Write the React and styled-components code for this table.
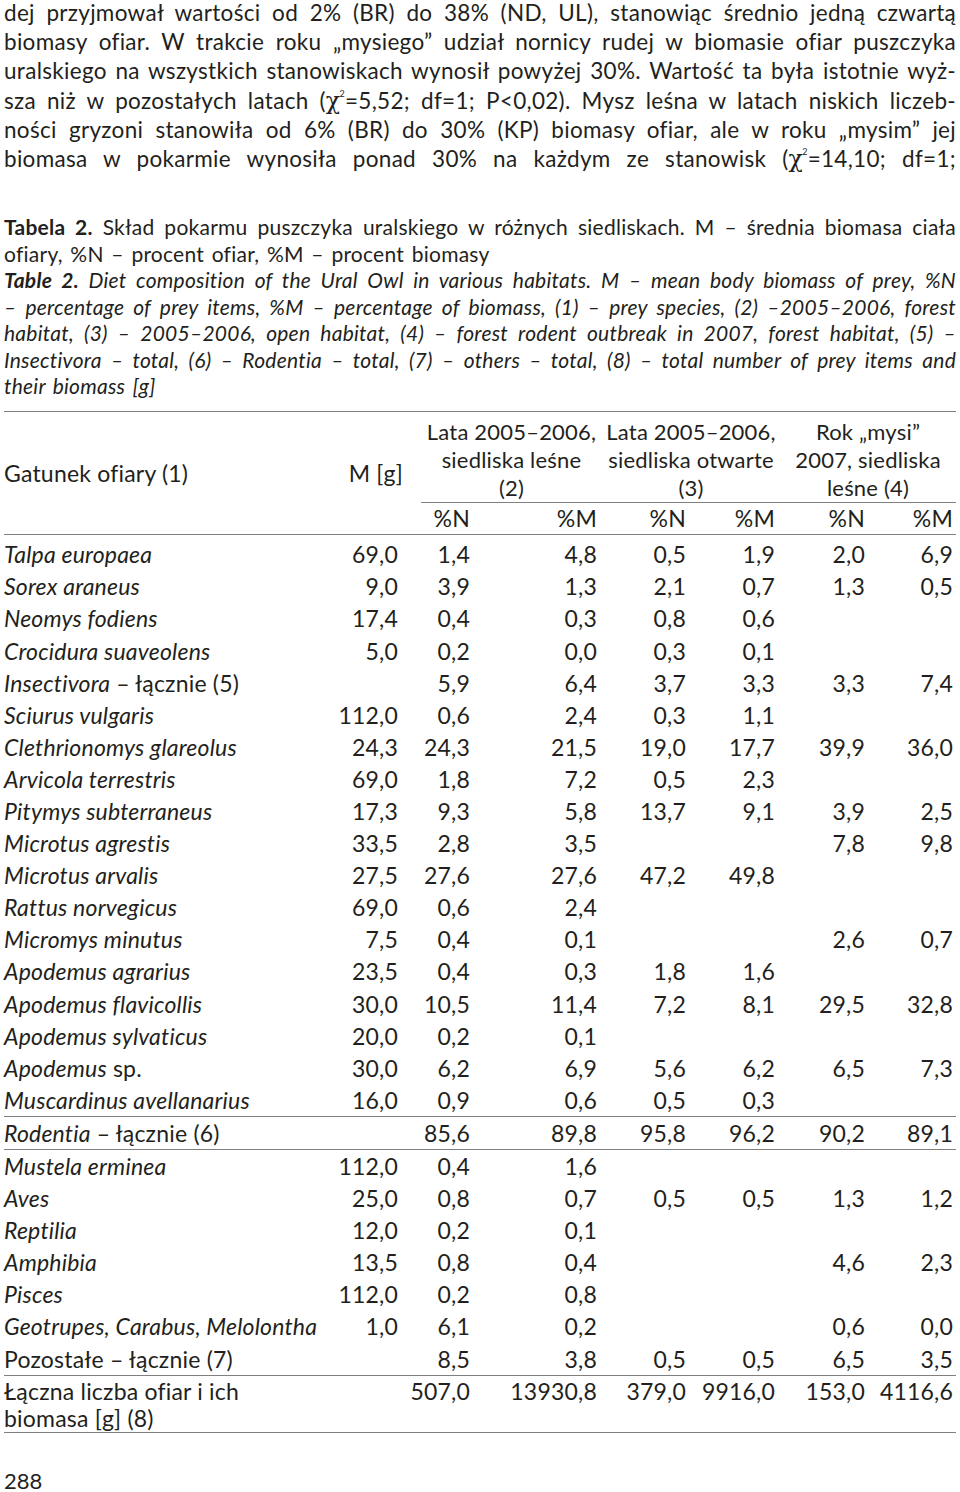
import React from "react";
import styled, { createGlobalStyle } from "styled-components";

const GlobalStyle = createGlobalStyle`
  html, body { margin: 0; padding: 0; background: #ffffff; }
  body {
    color: #231f20;
    font-family: Lato, "Open Sans", "Liberation Sans", sans-serif;
    -webkit-font-smoothing: antialiased;
  }
`;

const Page = styled.div`
  width: 952px;
  padding: 0 4px;
  overflow: hidden;
`;

const Para = styled.div`
  margin: -2px 0 0;
  font-size: 22.5px;
  line-height: 29.2px;
  letter-spacing: 0.3px;
  word-spacing: 2px;
`;

const Line = styled.div`
  text-align: justify;
  text-align-last: ${(p) => (p.$last ? "left" : "justify")};
  font-style: ${(p) => (p.$en ? "italic" : "normal")};
  white-space: nowrap;
`;

const Chi = styled.span`
  font-family: "DejaVu Serif", "Liberation Serif", serif;
  font-size: 1.05em;
  line-height: 0;
  sup {
    font-family: Lato, sans-serif;
    font-size: 9px;
    line-height: 0;
    vertical-align: 12px;
    margin-left: -1px;
  }
`;

const Caption = styled.div`
  margin-top: 41px;
  font-size: 21px;
  line-height: 26.5px;
  letter-spacing: 0.25px;
  word-spacing: 2px;
`;

const Bold = styled.b`
  font-weight: 700;
`;

const Table = styled.table`
  margin-top: 11px;
  width: 952px;
  table-layout: fixed;
  border-collapse: collapse;
  font-size: 23px;
  letter-spacing: 0.2px;
  border-top: 1.5px solid #808080;
  border-bottom: 1.5px solid #808080;
`;

const NameHead = styled.th`
  font-weight: 400;
  text-align: left;
  vertical-align: middle;
  padding: 0;
  white-space: nowrap;
  border-bottom: 1.5px solid #808080;
`;

const MHead = styled.th`
  font-weight: 400;
  text-align: right;
  vertical-align: middle;
  padding: 0;
  white-space: nowrap;
  border-bottom: 1.5px solid #808080;
`;

const GroupHead = styled.th`
  font-weight: 400;
  padding: 0;
  vertical-align: top;
`;

const GroupInner = styled.div`
  margin-left: ${(p) => p.$indent || 0}px;
  padding-top: 6px;
  text-align: center;
  font-size: 22px;
  line-height: 28px;
  white-space: nowrap;
  border-bottom: 1.5px solid #808080;
`;

const SubHead = styled.th`
  font-weight: 400;
  text-align: right;
  padding: 0 ${(p) => p.$pr ?? 5}px 0 0;
  line-height: 31px;
  white-space: nowrap;
  border-bottom: 1.5px solid #808080;
`;

const Row = styled.tr`
  border-top: ${(p) => (p.$rule ? "1.5px solid #808080" : "none")};
  border-bottom: ${(p) => (p.$ruleBelow ? "1.5px solid #808080" : "none")};
`;

const Name = styled.td`
  padding: ${(p) => (p.$first ? "3.5px 0 0" : p.$tall ? "2px 0 0.5px" : "0")};
  line-height: ${(p) => (p.$tall ? "27px" : "32.1px")};
  text-align: left;
  vertical-align: top;
  white-space: ${(p) => (p.$tall ? "normal" : "nowrap")};
`;

const Num = styled.td`
  padding: ${(p) => (p.$first ? "3.5px" : p.$tall ? "2px" : "0")}
    ${(p) => p.$pr ?? 5}px 0 0;
  line-height: ${(p) => (p.$tall ? "27px" : "32.1px")};
  text-align: right;
  vertical-align: top;
  white-space: nowrap;
`;

const PageNo = styled.div`
  margin-top: 38px;
  font-size: 22px;
  line-height: 20px;
`;

const I = styled.i`
  font-style: italic;
`;

const colWidths = [326, 73, 72, 127, 89, 89, 90, 86];

const rows = [
  [<I>Talpa europaea</I>, "69,0", "1,4", "4,8", "0,5", "1,9", "2,0", "6,9"],
  [<I>Sorex araneus</I>, "9,0", "3,9", "1,3", "2,1", "0,7", "1,3", "0,5"],
  [<I>Neomys fodiens</I>, "17,4", "0,4", "0,3", "0,8", "0,6", "", ""],
  [<I>Crocidura suaveolens</I>, "5,0", "0,2", "0,0", "0,3", "0,1", "", ""],
  [<><I>Insectivora</I> – łącznie (5)</>, "", "5,9", "6,4", "3,7", "3,3", "3,3", "7,4"],
  [<I>Sciurus vulgaris</I>, "112,0", "0,6", "2,4", "0,3", "1,1", "", ""],
  [<I>Clethrionomys glareolus</I>, "24,3", "24,3", "21,5", "19,0", "17,7", "39,9", "36,0"],
  [<I>Arvicola terrestris</I>, "69,0", "1,8", "7,2", "0,5", "2,3", "", ""],
  [<I>Pitymys subterraneus</I>, "17,3", "9,3", "5,8", "13,7", "9,1", "3,9", "2,5"],
  [<I>Microtus agrestis</I>, "33,5", "2,8", "3,5", "", "", "7,8", "9,8"],
  [<I>Microtus arvalis</I>, "27,5", "27,6", "27,6", "47,2", "49,8", "", ""],
  [<I>Rattus norvegicus</I>, "69,0", "0,6", "2,4", "", "", "", ""],
  [<I>Micromys minutus</I>, "7,5", "0,4", "0,1", "", "", "2,6", "0,7"],
  [<I>Apodemus agrarius</I>, "23,5", "0,4", "0,3", "1,8", "1,6", "", ""],
  [<I>Apodemus flavicollis</I>, "30,0", "10,5", "11,4", "7,2", "8,1", "29,5", "32,8"],
  [<I>Apodemus sylvaticus</I>, "20,0", "0,2", "0,1", "", "", "", ""],
  [<><I>Apodemus</I> sp.</>, "30,0", "6,2", "6,9", "5,6", "6,2", "6,5", "7,3"],
  [<I>Muscardinus avellanarius</I>, "16,0", "0,9", "0,6", "0,5", "0,3", "", ""],
  [<><I>Rodentia</I> – łącznie (6)</>, "", "85,6", "89,8", "95,8", "96,2", "90,2", "89,1", "rule"],
  [<I>Mustela erminea</I>, "112,0", "0,4", "1,6", "", "", "", ""],
  [<I>Aves</I>, "25,0", "0,8", "0,7", "0,5", "0,5", "1,3", "1,2"],
  [<I>Reptilia</I>, "12,0", "0,2", "0,1", "", "", "", ""],
  [<I>Amphibia</I>, "13,5", "0,8", "0,4", "", "", "4,6", "2,3"],
  [<I>Pisces</I>, "112,0", "0,2", "0,8", "", "", "", ""],
  [<I>Geotrupes, Carabus, Melolontha</I>, "1,0", "6,1", "0,2", "", "", "0,6", "0,0"],
  [<>Pozostałe – łącznie (7)</>, "", "8,5", "3,8", "0,5", "0,5", "6,5", "3,5"],
];

const totals = ["507,0", "13930,8", "379,0", "9916,0", "153,0", "4116,6"];

const ChiSq = () => (
  <Chi>
    χ<sup>2</sup>
  </Chi>
);

export default function App() {
  return (
    <Page>
      <GlobalStyle />
      <Para>
        <Line>dej przyjmował wartości od 2% (BR) do 38% (ND, UL), stanowiąc średnio jedną czwartą</Line>
        <Line>biomasy ofiar. W trakcie roku „mysiego” udział nornicy rudej w biomasie ofiar puszczyka</Line>
        <Line>uralskiego na wszystkich stanowiskach wynosił powyżej 30%. Wartość ta była istotnie wyż-</Line>
        <Line>
          sza niż w pozostałych latach (<ChiSq />=5,52; df=1; P&lt;0,02). Mysz leśna w latach niskich liczeb-
        </Line>
        <Line>ności gryzoni stanowiła od 6% (BR) do 30% (KP) biomasy ofiar, ale w roku „mysim” jej</Line>
        <Line>
          biomasa w pokarmie wynosiła ponad 30% na każdym ze stanowisk (<ChiSq />=14,10; df=1;
        </Line>
      </Para>

      <Caption>
        <Line>
          <Bold>Tabela 2.</Bold> Skład pokarmu puszczyka uralskiego w różnych siedliskach. M – średnia biomasa ciała
        </Line>
        <Line $last>ofiary, %N – procent ofiar, %M – procent biomasy</Line>
        <Line $en>
          <Bold>Table 2.</Bold> Diet composition of the Ural Owl in various habitats. M – mean body biomass of prey, %N
        </Line>
        <Line $en>
          – percentage of prey items, %M – percentage of biomass, (1) – prey species, (2) –2005–2006, forest
        </Line>
        <Line $en>
          habitat, (3) – 2005–2006, open habitat, (4) – forest rodent outbreak in 2007, forest habitat, (5) –
        </Line>
        <Line $en>
          Insectivora – total, (6) – Rodentia – total, (7) – others – total, (8) – total number of prey items and
        </Line>
        <Line $en $last>
          their biomass [g]
        </Line>
      </Caption>

      <Table>
        <colgroup>
          {colWidths.map((w, i) => (
            <col key={i} style={{ width: w }} />
          ))}
        </colgroup>
        <thead>
          <tr>
            <NameHead rowSpan={2}>Gatunek ofiary (1)</NameHead>
            <MHead rowSpan={2}>M [g]</MHead>
            <GroupHead colSpan={2}>
              <GroupInner $indent={18}>
                Lata 2005–2006,
                <br />
                siedliska leśne
                <br />
                (2)
              </GroupInner>
            </GroupHead>
            <GroupHead colSpan={2}>
              <GroupInner>
                Lata 2005–2006,
                <br />
                siedliska otwarte
                <br />
                (3)
              </GroupInner>
            </GroupHead>
            <GroupHead colSpan={2}>
              <GroupInner>
                Rok „mysi”
                <br />
                2007, siedliska
                <br />
                leśne (4)
              </GroupInner>
            </GroupHead>
          </tr>
          <tr>
            <SubHead>%N</SubHead>
            <SubHead>%M</SubHead>
            <SubHead>%N</SubHead>
            <SubHead>%M</SubHead>
            <SubHead>%N</SubHead>
            <SubHead $pr={3}>%M</SubHead>
          </tr>
        </thead>
        <tbody>
          {rows.map((r, i) => {
            const ruled = r[8] === "rule";
            return (
              <Row key={i} $rule={ruled} $ruleBelow={ruled || i === rows.length - 1}>
                <Name $first={i === 0}>{r[0]}</Name>
                {r.slice(1, 8).map((v, j) => (
                  <Num key={j} $first={i === 0} $pr={j === 6 ? 3 : 5}>
                    {v}
                  </Num>
                ))}
              </Row>
            );
          })}
          <Row>
            <Name $tall>
              Łączna liczba ofiar i ich
              <br />
              biomasa [g] (8)
            </Name>
            <Num $tall></Num>
            {totals.map((v, j) => (
              <Num key={j} $tall $pr={j === 5 ? 3 : 5}>
                {v}
              </Num>
            ))}
          </Row>
        </tbody>
      </Table>

      <PageNo>288</PageNo>
    </Page>
  );
}
